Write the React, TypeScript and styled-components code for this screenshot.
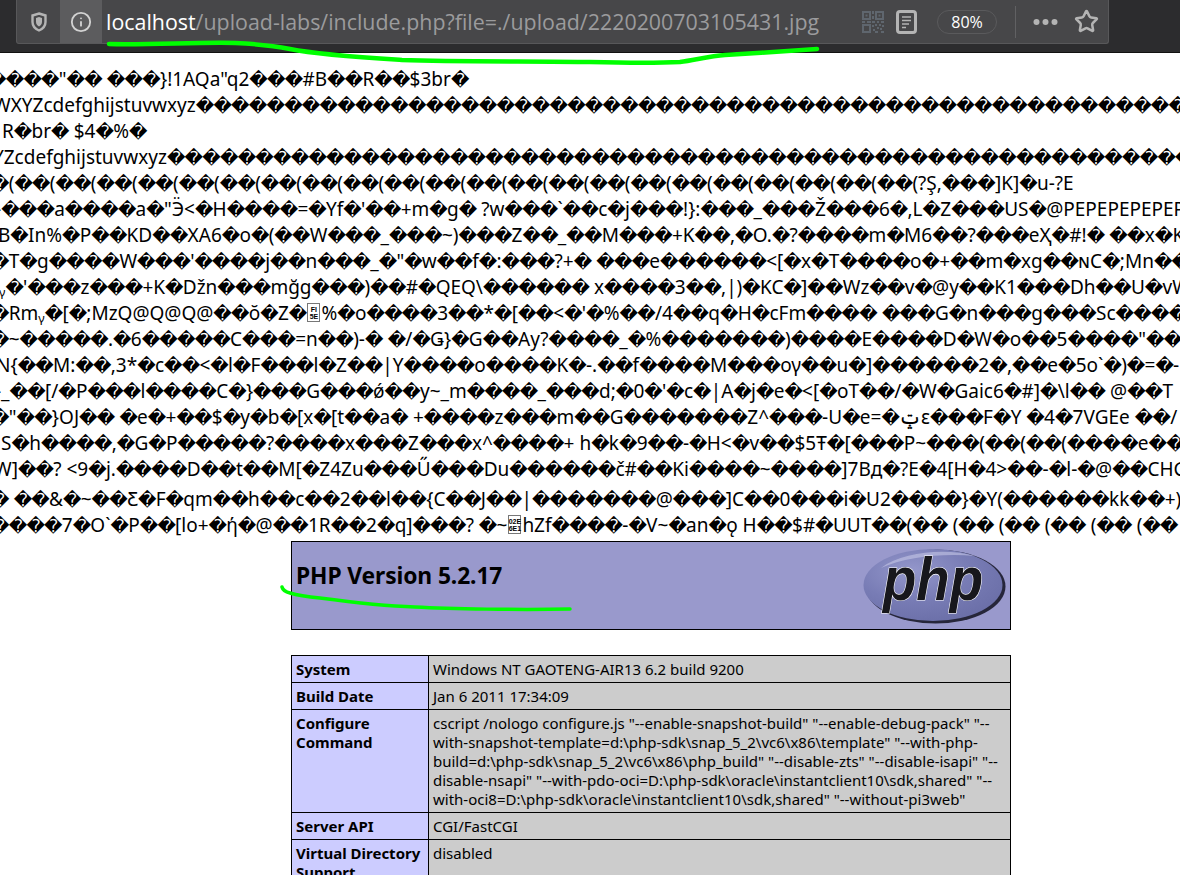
import React from "react";
import styled, { createGlobalStyle } from "styled-components";
import { Info, Star } from "lucide-react";

const GlobalStyle = createGlobalStyle`
  html, body {
    margin: 0;
    padding: 0;
    background: #fff;
    overflow: hidden;
  }
`;

const Page = styled.div`
  position: relative;
  width: 1180px;
  height: 875px;
  overflow: hidden;
  font-family: "Noto Sans", "Open Sans", sans-serif;
  color: #000;
`;

const Toolbar = styled.div`
  height: 52px;
  box-sizing: content-box;
  border-bottom: 1px solid #111;
  background: #2c2c2e;
  padding: 0 71px 0 16px;
`;

const AddressField = styled.div`
  height: 44px;
  box-sizing: border-box;
  display: flex;
  align-items: center;
  background: #474749;
  border: 1px solid #58585a;
  border-top: none;
  border-radius: 0 0 3px 3px;
`;

const ShieldSlot = styled.div`
  width: 43px;
  height: 100%;
  display: flex;
  align-items: center;
  justify-content: center;
  color: #b4b4b4;
`;

const InfoSlot = styled.div`
  width: 42px;
  height: 100%;
  display: flex;
  align-items: center;
  justify-content: center;
  background: #5c5c5e;
  color: #d2d2d2;
`;

const Url = styled.div`
  margin-left: 4px;
  flex: 1;
  font-family: "Open Sans", sans-serif;
  font-size: 21.4px;
  white-space: nowrap;
  color: #9b9b9d;
`;

const Host = styled.span`
  color: #fff;
`;

const ActionIcons = styled.div`
  display: flex;
  align-items: center;
  color: #b4b4b4;
  padding-right: 9px;
`;

const ReaderSlot = styled.div`
  margin-left: 12px;
  display: flex;
`;

const ZoomPill = styled.div`
  width: 60px;
  height: 24px;
  margin: 0 18px 0 20px;
  box-sizing: border-box;
  border: 1px solid #5a5a5c;
  border-radius: 12px;
  display: flex;
  align-items: center;
  justify-content: center;
  font-family: "Open Sans", sans-serif;
  font-size: 16px;
  color: #fff;
`;

const Divider = styled.div`
  width: 1px;
  height: 32px;
  background: #616163;
  margin-right: 17px;
`;

const StarSlot = styled.div`
  margin-left: 16px;
  display: flex;
`;

const Dump = styled.div`
  padding-top: 13px;
  height: 475px;
  box-sizing: content-box;
  overflow: hidden;
`;

const Line = styled.div<{ $shift: number; $top?: number }>`
  height: 26px;
  line-height: 26px;
  margin-left: ${(p) => p.$shift}px;
  margin-top: ${(p) => p.$top ?? 0}px;
  white-space: pre;
  font-family: "Noto Sans", sans-serif;
  font-size: 19px;
`;

const Bad = styled.span`
  display: inline-block;
  width: 17.7px;
  text-align: center;
  font-family: "DejaVu Sans", sans-serif;
  font-size: 18px;
  line-height: 20px;
`;

const Tofu = styled.span`
  display: inline-flex;
  flex-direction: column;
  align-items: center;
  justify-content: center;
  box-sizing: border-box;
  width: 13px;
  height: 19px;
  margin: 3px 1px 0;
  vertical-align: top;
  border: 1px solid #777;
  font-family: "Liberation Sans", sans-serif;
  font-size: 7px;
  line-height: 7px;
  font-weight: bold;
`;

const InfoColumn = styled.div`
  width: 720px;
  margin-left: 291px;
`;

const VersionHeader = styled.div`
  height: 89px;
  box-sizing: border-box;
  border: 1px solid #000;
  background: #9999cc;
  display: flex;
  align-items: center;
  justify-content: space-between;
  padding: 0 4px;
`;

const VersionTitle = styled.h1`
  margin: 0 0 20px;
  font-family: "Noto Sans", sans-serif;
  font-size: 22.800px;
  font-weight: 700;
  letter-spacing: -0.1px;
`;

const InfoTable = styled.table`
  width: 720px;
  margin-top: 25px;
  border-collapse: collapse;
  table-layout: fixed;
  font-family: "Noto Sans", sans-serif;
  font-size: 15px;
  line-height: 19px;
`;

const KeyCell = styled.td`
  width: 128px;
  padding: 4px 4px 3px;
  background: #ccccff;
  border: 1px solid #000;
  font-weight: 700;
  vertical-align: top;
`;

const ValueCell = styled.td`
  padding: 4px 4px 3px;
  background: #cccccc;
  border: 1px solid #000;
  vertical-align: top;
`;

const Scribble = styled.svg`
  position: absolute;
  inset: 0;
  pointer-events: none;
`;

const LINES: [number, string, number?][] = [
  [-12, `����"�� ���}!1AQa"q2���#B��R��$3br�`],
  [-7, `WXYZcdefghijstuvwxyz����������������������������������������������������������������������`],
  [2, `R�br� $4�%�`],
  [-7, `YZcdefghijstuvwxyz�����������������������������������������������������������������������`],
  [-9, `�(��(��(��(��(��(��(��(��(��(��(��(��(��(��(��(��(��(��(��(��(��(��(?Ş,���]K]�u-?E`],
  [-5, `-���a����a�"Ӭ<�H����=�Yf�'��+m�g� ?w���\`��c�j���!}:���_���Ž���6�,L�Z���US�@PEPEPEPEPEPEPEP`],
  [-2, `B�In%�P��KD��XA6�o�(��W���_���~)���Z��_��M���+K��,�O.�?����m�M6��?���eҲ�#!� ��x�K`],
  [-9, `�T�g����W���'����j��n���_�"�w��f�:���?+� ���e������<[�x�T����o�+��m�xg��ɴC�;Mn��-`],
  [-1, `ᵧ�'���z���+K�Džn���mğg���)��#�QEQ\\������ x����3��,|)�KC�]��Wz��v�@y��K1���Dh��U�vW`],
  [-9, `�Rmᵧ�[�;MzQ@Q@Q@��ŏ�Z�{FI/5E}%�o����3��*�[��<�'�%��/4��q�H�cFm���� ���G�n���g���Sc����o͟`],
  [-9, `�~�����.�6�����C���=n��)-� �/�Ǥ}�G��Ay?����_�%�������)����E����D�W�o��5����"��`],
  [-4, `N{��M:��,3*�c��<�l�F���l�Z��|Y����o����K�-.��f����M���ογ��u�]������2�,��e�5o\`�)�=�-`],
  [-5, `-_��[/�P���l����C�}���G���ǿ��y~_m����_���d;�0�'�c�|A�j�e�<[�oT��/�W�Gaic6�#]�\\l�� @��T`],
  [-9, `�"��}OJ�� �e�+��$�y�b�[x�[t��a� +����z���m��G�������Z^���-U�e=�ݓε���F�Y �4�7VGEe ��/`],
  [1, `S�h����,�G�P�����?����x���Z���x^����+ h�k�9��-�H<�v��$5Ŧ�[���P~���(��(��(����e���Q<`],
  [-6, `W]��? <9�j.����D��t��M[�Z4Zu���Ű���Du������č#��Ki����~����]7Bд�?E�4[H�4>��-�l-�@��CHG"`],
  [-9, `� ��&�~��Ƹ�F�qm��h��c��2��l��{C��J��|�������@���]C��0���i�U2����}�Y(������kk��+)`, 4],
  [-9, `����7�O\`�P��[lo+�ή�@��1R��2�q]���? �~{02E/6E1}hZf����-�V~�an�ǫ H��$#�UUT��(�� (�� (�� (�� (�� (�� (��`],
];

const renderLine = (text: string) =>
  text.split(/(�|\{[0-9A-Z]+\/[0-9A-Z]+\})/).map((part, i) => {
    if (part === "�") return <Bad key={i}>�</Bad>;
    if (/^\{[0-9A-Z]+\/[0-9A-Z]+\}$/.test(part)) {
      const [top, bottom] = part.slice(1, -1).split("/");
      return (
        <Tofu key={i}>
          <span>{top}</span>
          <span>{bottom}</span>
        </Tofu>
      );
    }
    return part;
  });

const ROWS: [string, string][] = [
  ["System", "Windows NT GAOTENG-AIR13 6.2 build 9200"],
  ["Build Date", "Jan 6 2011 17:34:09"],
  [
    "Configure Command",
    `cscript /nologo configure.js "--enable-snapshot-build" "--enable-debug-pack" "--with-snapshot-template=d:\\php-sdk\\snap_5_2\\vc6\\x86\\template" "--with-php-build=d:\\php-sdk\\snap_5_2\\vc6\\x86\\php_build" "--disable-zts" "--disable-isapi" "--disable-nsapi" "--with-pdo-oci=D:\\php-sdk\\oracle\\instantclient10\\sdk,shared" "--with-oci8=D:\\php-sdk\\oracle\\instantclient10\\sdk,shared" "--without-pi3web"`,
  ],
  ["Server API", "CGI/FastCGI"],
  ["Virtual Directory Support", "disabled"],
];

const ShieldIcon = () => (
  <svg width="16" height="20" viewBox="0 0 16 20" fill="none">
    <path d="M8 1.5 L14.5 3.5 V10 C14.5 14 11.5 17 8 18.5 C4.5 17 1.5 14 1.5 10 V3.5 Z" stroke="currentColor" strokeWidth="2.4" />
    <path d="M8 5 L11 6 V10 C11 12 9.5 13.5 8 14.5 C6.5 13.5 5 12 5 10 V6 Z" fill="currentColor" />
  </svg>
);

const QrIcon = () => (
  <svg width="22" height="22" viewBox="0 0 22 22" fill="#5f666e">
    <path d="M0 0h9v9H0z M2 2v5h5V2z M13 0h9v9h-9z M15 2v5h5V2z M0 13h9v9H0z M2 15v5h5v-5z" fillRule="evenodd" />
    <path d="M3.500 3.500h2v2h-2z M16.500 3.500h2v2h-2z M10 0h2v3h-2z M10 5h2v3h-2z M0 10h3v2H0z M5 10h4v2H5z M10 10h3v2h-3z M15 10h2v2h-2z M19 10h3v2h-3z M10 14h2v2h-2z M13 13h2v2h-2z M17 13h2v2h-2z M20 14h2v2h-2z M11 18h2v2h-2z M15 16h2v2h-2z M18 17h2v2h-2z M13 20h3v2h-3z M19 20h3v2h-3z" />
  </svg>
);

const ReaderIcon = () => (
  <svg width="21" height="24" viewBox="0 0 21 24" fill="none">
    <rect x="1.500" y="1.500" width="18" height="21" rx="2.500" stroke="currentColor" strokeWidth="3" />
    <path d="M6 7h9M6 10.500h9M6 14h7M6 17.500h4" stroke="currentColor" strokeWidth="1.500" />
  </svg>
);

const DotsIcon = () => (
  <svg width="25" height="8" viewBox="0 0 25 8" fill="currentColor">
    <circle cx="3.500" cy="4" r="3" />
    <circle cx="12.500" cy="4" r="3" />
    <circle cx="21.500" cy="4" r="3" />
  </svg>
);

const PhpLogo = () => (
  <svg width="143" height="76" viewBox="0 0 143 76">
    <defs>
      <radialGradient id="phpFill" cx="35%" cy="30%" r="75%">
        <stop offset="0%" stopColor="#9497cb" />
        <stop offset="55%" stopColor="#787cb5" />
        <stop offset="100%" stopColor="#6b6fa8" />
      </radialGradient>
    </defs>
    <ellipse cx="72.500" cy="38.500" rx="70" ry="37" fill="#26263a" />
    <ellipse cx="70" cy="37" rx="69.500" ry="36" fill="url(#phpFill)" />
    <path d="M18 20 C40 3 85 0 112 8 C80 5 42 9 18 20 Z" fill="#c4c6e6" opacity="0.6" />
    <text
      x="70"
      y="52"
      textAnchor="middle"
      fontFamily="Liberation Sans, sans-serif"
      fontStyle="italic"
      fontWeight="700"
      fontSize="62"
      textLength="100"
      lengthAdjust="spacingAndGlyphs"
      fill="#17171c"
      stroke="#fff"
      strokeWidth="1.200"
      paintOrder="stroke"
    >
      php
    </text>
  </svg>
);

export default function App() {
  return (
    <Page>
      <GlobalStyle />
      <Toolbar>
        <AddressField>
          <ShieldSlot>
            <ShieldIcon />
          </ShieldSlot>
          <InfoSlot>
            <Info size={22} strokeWidth={2} />
          </InfoSlot>
          <Url>
            <Host>localhost</Host>/upload-labs/include.php?file=./upload/2220200703105431.jpg
          </Url>
          <ActionIcons>
            <QrIcon />
            <ReaderSlot>
              <ReaderIcon />
            </ReaderSlot>
            <ZoomPill>80%</ZoomPill>
            <Divider />
            <DotsIcon />
            <StarSlot>
              <Star size={25} strokeWidth={2.4} />
            </StarSlot>
          </ActionIcons>
        </AddressField>
      </Toolbar>
      <Dump>
        {LINES.map(([shift, text, top], i) => (
          <Line key={i} $shift={shift} $top={top}>
            {renderLine(text)}
          </Line>
        ))}
      </Dump>
      <InfoColumn>
        <VersionHeader>
          <VersionTitle>PHP Version 5.2.17</VersionTitle>
          <PhpLogo />
        </VersionHeader>
        <InfoTable>
          <tbody>
            {ROWS.map(([key, value], i) => (
              <tr key={i}>
                <KeyCell>{key}</KeyCell>
                <ValueCell>{value}</ValueCell>
              </tr>
            ))}
          </tbody>
        </InfoTable>
      </InfoColumn>
      <Scribble width="1180" height="875" fill="none" stroke="#00ff00" strokeLinecap="round" strokeLinejoin="round">
        <path d="M109 44 C150 45 200 42 235 43 C260 44 275 46 290 49 C320 55 370 58 402 60 C460 62 540 61 590 62 C630 63 660 63 680 62 C695 60 710 56 725 55 C755 53 790 51 817 49" strokeWidth="4.500" />
        <path d="M282 587 C283 591 286 592 290 593 C300 596 310 597 320 598 C350 602 385 606 415 607 C450 609 520 610 570 609" strokeWidth="3.500" />
      </Scribble>
    </Page>
  );
}
